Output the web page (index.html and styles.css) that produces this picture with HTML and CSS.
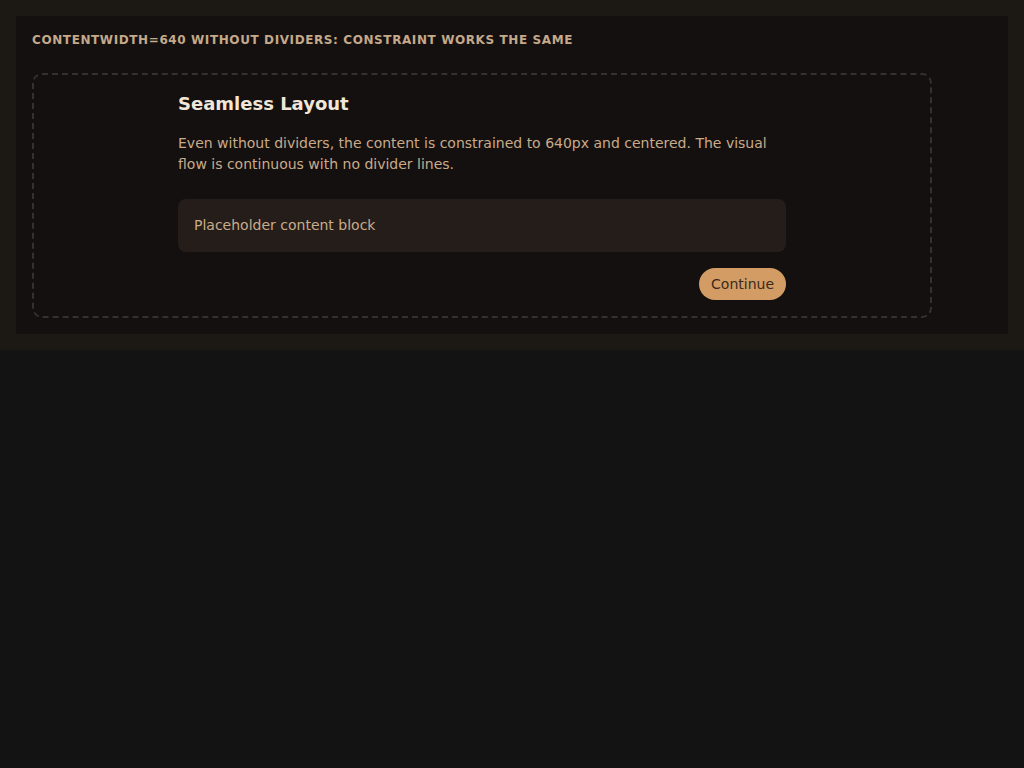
FILE: index.html
```html
<!DOCTYPE html>
<html lang="en">
  <head>
    <meta charset="UTF-8" />
    <meta name="viewport" content="width=device-width, initial-scale=1.0" />
    <title>Seamless Layout</title>
    <link rel="stylesheet" href="styles.css">
  </head>
  <body>
    <div class="frame">
      <div class="panel">
        <h2 class="label">contentWidth=640 without dividers: constraint works the same</h2>
        <div class="stage">
          <div class="content">
            <h1 class="title">Seamless Layout</h1>
            <p class="text">
              Even without dividers, the content is constrained to 640px and centered. The visual
              flow is continuous with no divider lines.
            </p>
            <div class="block">Placeholder content block</div>
            <div class="actions">
              <button class="btn">Continue</button>
            </div>
          </div>
        </div>
      </div>
    </div>
  </body>
</html>
```

FILE: styles.css
```css
body {
  margin: 0;
  background: #131313;
  font-family: "DejaVu Sans", sans-serif;
  color: #c9ab8a;
}
.frame {
  background: #1c1813;
  padding: 16px;
}
.panel {
  background: #141010;
  padding: 16px;
}
.label {
  margin: 0 0 25px;
  font-size: 12px;
  font-weight: bold;
  letter-spacing: 0.05em;
  text-transform: uppercase;
  color: #c4a98a;
  line-height: 16px;
}
.stage {
  max-width: 864px;
  border: 2px dashed #363131;
  border-radius: 10px;
  padding: 16px;
}
.content {
  max-width: 608px;
  margin: 0 auto;
  padding: 0 16px;
}
.title {
  margin: 0 0 16px;
  font-size: 18px;
  line-height: 26px;
  color: #f1e6d8;
}
.text {
  margin: 0 0 24px;
  font-size: 14px;
  line-height: 21px;
}
.block {
  background: #241d1a;
  border-radius: 8px;
  padding: 16px;
  font-size: 14px;
  line-height: 21px;
}
.actions {
  display: flex;
  justify-content: flex-end;
  margin-top: 16px;
}
.btn {
  font-family: inherit;
  font-size: 14px;
  line-height: 20px;
  padding: 6px 12px;
  border: 0;
  border-radius: 999px;
  background: #d39c64;
  color: #3a2a1c;
}
```
